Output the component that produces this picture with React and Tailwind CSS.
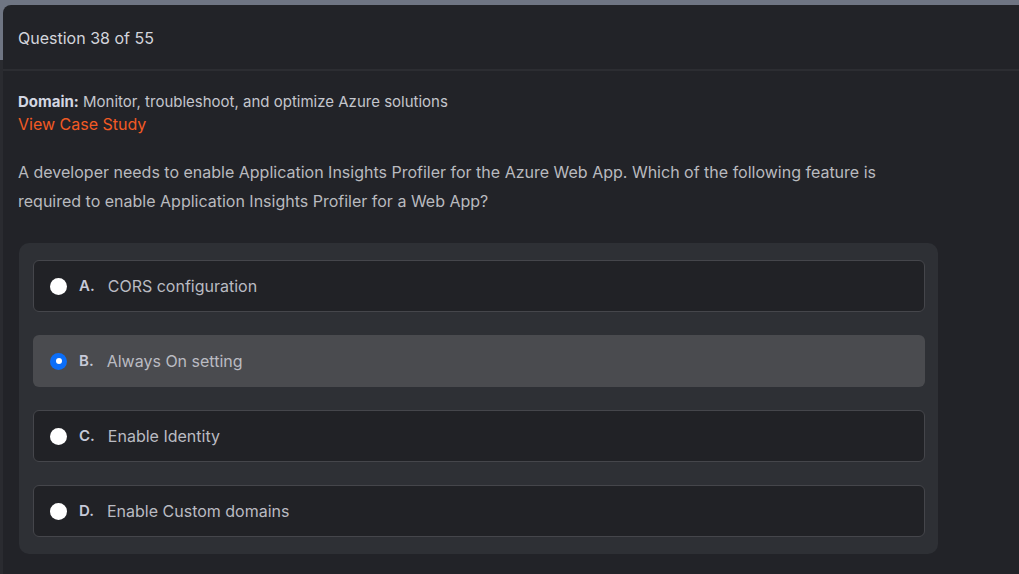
import { useState } from 'react';

const options = [
  { key: 'A', text: 'CORS configuration' },
  { key: 'B', text: 'Always On setting' },
  { key: 'C', text: 'Enable Identity' },
  { key: 'D', text: 'Enable Custom domains' },
];

const Radio = ({ checked }) => (
  <span
    className={`flex h-[17px] w-[17px] shrink-0 items-center justify-center rounded-full ${
      checked ? 'bg-[#0b6ef8]' : 'bg-white'
    }`}
  >
    {checked && <span className="h-[6px] w-[6px] rounded-full bg-white" />}
  </span>
);

const App = () => {
  const [selected, setSelected] = useState('B');

  return (
    <div
      className="min-h-screen bg-[linear-gradient(to_bottom,#6f7583_60px,#2a2b30_60px)] pt-[5px] pl-[3px]"
      style={{ fontFamily: 'Inter, "Noto Sans", sans-serif' }}
    >
      <div className="min-h-[569px] rounded-tl-lg bg-[#222328]">
        {/* Header */}
        <div className="flex h-[66px] items-center border-b-2 border-[#2c2d32] px-[15px] pt-[2px]">
          <span className="text-[16px] text-[#d3d5dc]">Question 38 of 55</span>
        </div>

        <div className="px-[15px] pt-[21px]">
          <p className="text-[15px] leading-[20px] text-[#c4c6cd]">
            <span className="font-bold text-[#d3d6e2]">Domain:</span> Monitor, troubleshoot, and optimize Azure
            solutions
          </p>
          <a className="block text-[16px] leading-[24px] text-[#f25a24]">View Case Study</a>

          <p className="mt-[22px] text-[16px] leading-[29px] text-[#b9babf]">
            A developer needs to enable Application Insights Profiler for the Azure Web App. Which of the following
            feature is
            <br />
            required to enable Application Insights Profiler for a Web App?
          </p>

          {/* Options */}
          <div className="mt-[27px] ml-px flex w-[919px] flex-col gap-[23px] rounded-[10px] bg-[#2e3035] pt-[17px] pb-[17px] pl-[14px] pr-[13px]">
            {options.map((o) => {
              const active = selected === o.key;
              return (
                <button
                  key={o.key}
                  onClick={() => setSelected(o.key)}
                  className={`flex h-[52px] items-center rounded-[6px] border pl-[16px] text-left ${
                    active ? 'border-transparent bg-[#4a4b4f]' : 'border-[#45464b] bg-[#212226]'
                  }`}
                >
                  <Radio checked={active} />
                  <span className="ml-[12px] mr-[13px] text-[15px] font-semibold text-[#c6c9d8]">{o.key}.</span>
                  <span className="text-[16px] text-[#babbc2]">{o.text}</span>
                </button>
              );
            })}
          </div>
        </div>
      </div>
    </div>
  );
};

export default App;
